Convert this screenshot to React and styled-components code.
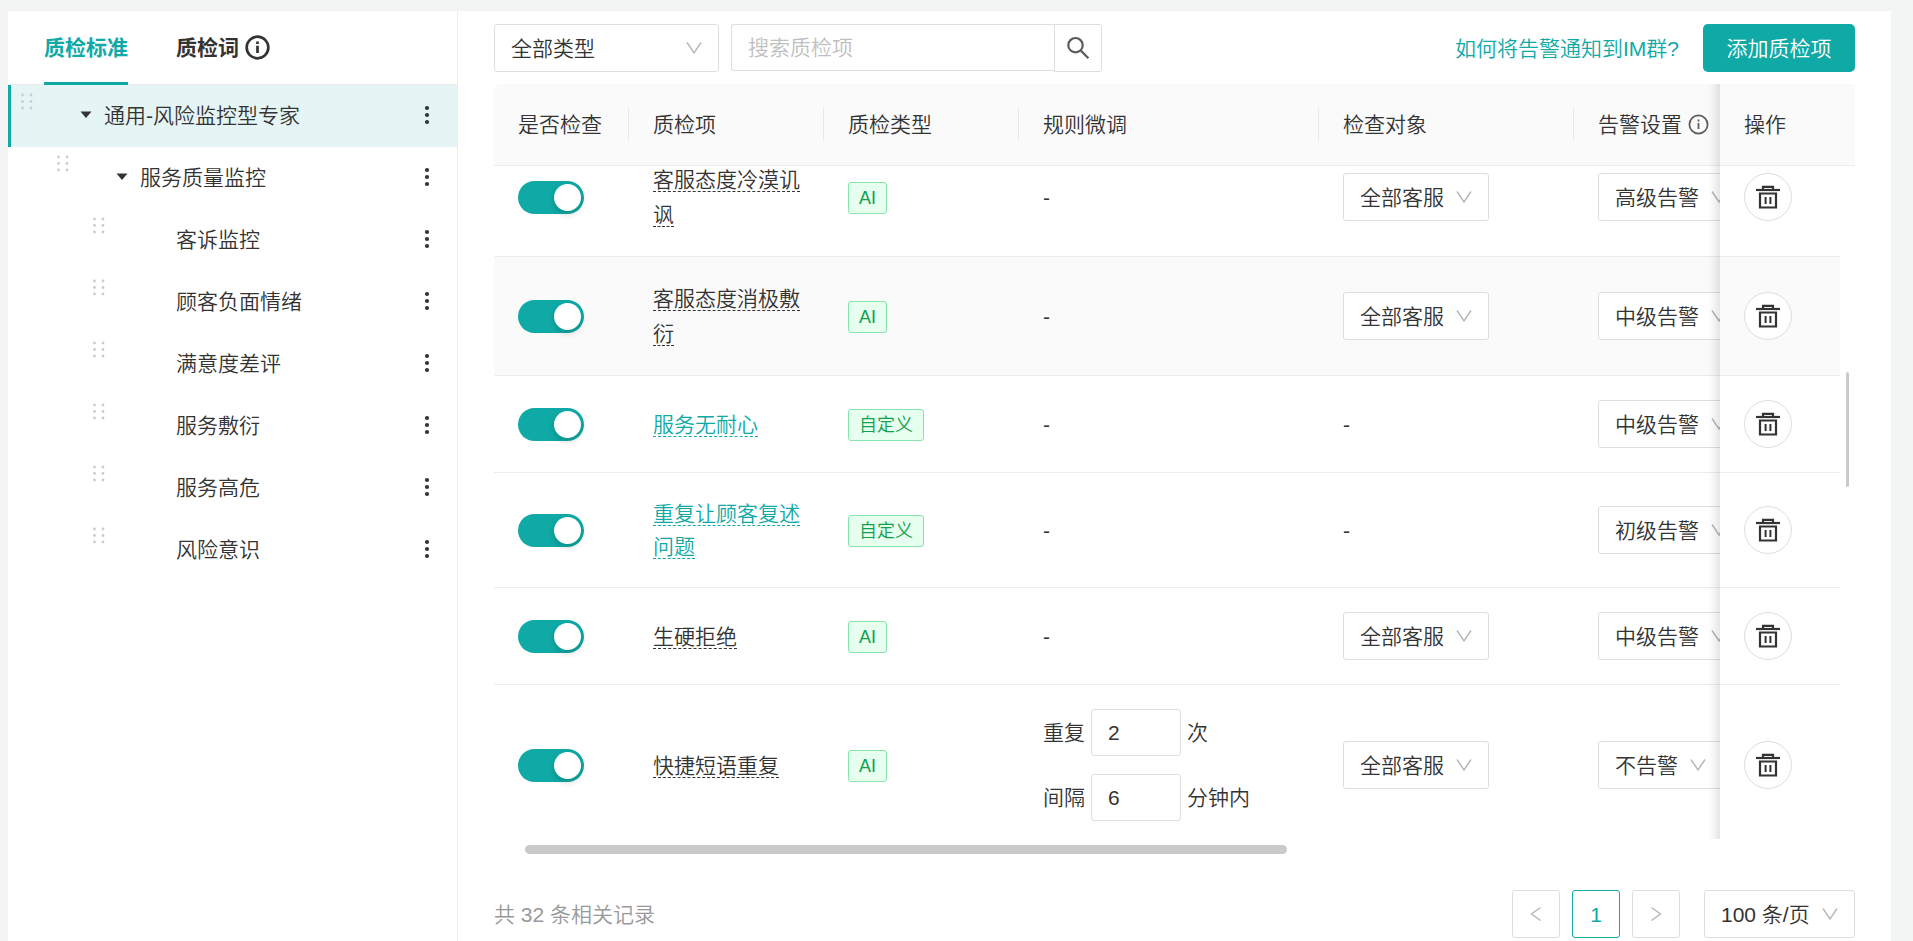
import { useLayoutEffect, useRef, useState } from 'react'
import styled, { createGlobalStyle } from 'styled-components'

const PRIMARY = '#0fa9a6'
const TEXT = '#333333'
const BORDER = '#dedede'
const LINE = '#ececec'

const GlobalStyle = createGlobalStyle`
  *, *::before, *::after {
    box-sizing: border-box;
  }

  body {
    margin: 0;
    background: #f3f5f5;
    color: ${TEXT};
    font-family: 'Liberation Sans', 'Noto Sans CJK SC', sans-serif;
    font-size: 21px;
    font-weight: 350;
    line-height: 33px;
  }

  button, input, select {
    font: inherit;
    color: inherit;
  }
`

const Page = styled.div`
  padding: 11px 22px 0 8px;
`

const Panel = styled.div`
  display: flex;
  min-height: calc(100vh - 11px);
  background: #ffffff;
`

/* ---------- sidebar ---------- */

const Sidebar = styled.aside`
  flex: 0 0 450px;
  border-right: 1px solid ${LINE};
`

const Tabs = styled.div`
  display: flex;
  gap: 48px;
  height: 74px;
  padding: 0 36px;
  border-bottom: 1px solid ${LINE};
`

const Tab = styled.button`
  display: flex;
  align-items: center;
  gap: 6px;
  margin: 0 0 -1px;
  padding: 1px 0 0;
  border: 0;
  border-bottom: 3px solid ${({ $active }) => ($active ? PRIMARY : 'transparent')};
  background: none;
  color: ${({ $active }) => ($active ? PRIMARY : TEXT)};
  font-weight: 700;
  cursor: pointer;
`

const Tree = styled.ul`
  margin: 0;
  padding: 0;
  list-style: none;
`

const TreeRow = styled.li`
  display: flex;
  align-items: center;
  height: 62px;
  padding: 0 18px 2px ${({ $level }) => 13 + $level * 36}px;
  background: ${({ $selected }) => ($selected ? '#e5f5f5' : 'transparent')};
  box-shadow: ${({ $selected }) => ($selected ? `inset 3px 0 0 ${PRIMARY}` : 'none')};
`

const Grip = styled.svg`
  align-self: flex-start;
  flex: none;
  margin: 8px 35px 0 0;
  fill: #cccccc;
`

const Switcher = styled.span`
  display: flex;
  justify-content: center;
  flex: 0 0 36px;
`

const IconButton = styled.button`
  display: flex;
  align-items: center;
  justify-content: center;
  padding: 0;
  width: 24px;
  height: 24px;
  border: 0;
  background: none;
  cursor: pointer;
`

const TreeLabel = styled.span`
  flex: 1;
`

/* ---------- toolbar ---------- */

const Main = styled.main`
  flex: 1;
  min-width: 0;
  padding: 13px 36px 0;
`

const Toolbar = styled.div`
  display: flex;
  align-items: center;
  gap: 12px;
  height: 48px;
  margin-bottom: 12px;
`

const SelectBox = styled.span`
  display: inline-grid;
  align-items: center;
  width: ${({ $width }) => $width}px;
  vertical-align: middle;

  select, svg {
    grid-area: 1 / 1;
  }

  select {
    width: 100%;
    height: 48px;
    padding: 0 36px 0 16px;
    border: 1px solid ${BORDER};
    border-radius: 3px;
    background: #ffffff;
    appearance: none;
    outline: none;
  }

  svg {
    justify-self: end;
    margin-right: 16px;
    pointer-events: none;
  }
`

const SearchForm = styled.form`
  display: flex;
  align-items: flex-start;
  width: 371px;
  height: 48px;
`

const SearchInput = styled.input`
  flex: 1;
  min-width: 0;
  height: 47px;
  padding: 0 16px;
  border: 1px solid ${BORDER};
  border-right: 0;
  border-radius: 3px 0 0 3px;
  outline: none;

  &::placeholder {
    color: #bfbfbf;
    opacity: 1;
  }
`

const SearchButton = styled.button`
  display: flex;
  align-items: center;
  justify-content: center;
  width: 48px;
  height: 48px;
  padding: 0;
  border: 1px solid ${BORDER};
  border-radius: 0 3px 3px 0;
  background: #ffffff;
`

const HelpLink = styled.a`
  margin-left: auto;
  margin-right: 12px;
  color: ${PRIMARY};
  text-decoration: none;
`

const AddButton = styled.button`
  width: 152px;
  height: 48px;
  padding: 0;
  border: 0;
  border-radius: 5px;
  background: ${PRIMARY};
  color: #ffffff;
`

/* ---------- table ---------- */

const HeadScroll = styled.div`
  overflow: hidden;
  border-radius: 5px 0 0 0;
`

const BodyArea = styled.div`
  display: flex;
  height: calc(100vh - 268px);
`

const BodyScroll = styled.div`
  flex: 1;
  min-width: 0;
  overflow: auto;
  scrollbar-width: none;
`

const Table = styled.table`
  width: 100%;
  min-width: ${({ $minWidth }) => $minWidth}px;
  table-layout: fixed;
  border-collapse: separate;
  border-spacing: 0;
`

const HeadCell = styled.th`
  height: 82px;
  padding: 0;
  border-bottom: 1px solid ${LINE};
  background: #fafafa;
  font-weight: 350;
  text-align: left;
`

const HeadLabel = styled.div`
  display: flex;
  align-items: center;
  gap: 6px;
  height: 33px;
  padding-left: 24px;
  border-right: 1px solid ${({ $divider }) => ($divider ? '#e8e8e8' : 'transparent')};
`

const Row = styled.tr`
  --row-bg: ${({ $hovered }) => ($hovered ? '#fafafa' : '#ffffff')};
`

const Cell = styled.td`
  padding: 24px;
  border-bottom: 1px solid ${LINE};
  background: var(--row-bg);
`

const fixedRight = `
  position: sticky;
  right: 0;

  &::before {
    content: '';
    position: absolute;
    top: 0;
    right: 100%;
    bottom: -1px;
    width: 45px;
    box-shadow: inset -15px 0 12px -12px rgba(0, 0, 0, 0.15);
    pointer-events: none;
  }
`

const FixedHeadCell = styled(HeadCell)`
  ${fixedRight}
`

const FixedCell = styled(Cell)`
  ${fixedRight}
`

const Switch = styled.input`
  display: flex;
  align-items: center;
  width: 66px;
  height: 33px;
  margin: 0;
  padding: 3px;
  border-radius: 17px;
  background: ${PRIMARY};
  appearance: none;
  cursor: pointer;

  &::before {
    content: '';
    width: 27px;
    height: 27px;
    margin-left: auto;
    border-radius: 50%;
    background: #ffffff;
    box-shadow: 0 3px 6px rgba(0, 35, 11, 0.2);
  }

  &:not(:checked) {
    background: #bfbfbf;
  }

  &:not(:checked)::before {
    margin-left: 0;
  }
`

const ItemName = styled.span`
  border-bottom: 1px dashed ${TEXT};
  line-height: 35px;
`

const ItemLink = styled.a`
  border-bottom: 1px dashed ${PRIMARY};
  color: ${PRIMARY};
  line-height: 33px;
  text-decoration: none;
`

const Tag = styled.span`
  display: inline-block;
  height: 32px;
  padding: 0 10px;
  border: 1px solid #86e5ac;
  border-radius: 3px;
  background: #e6ffef;
  color: #10a14f;
  font-size: 18px;
  line-height: 30px;
  vertical-align: middle;
`

const Rules = styled.div`
  display: flex;
  flex-direction: column;
  gap: 18px;
`

const Rule = styled.label`
  display: flex;
  align-items: center;
  gap: 6px;
`

const RuleInput = styled.input`
  width: 90px;
  height: 47px;
  padding: 0 16px;
  border: 1px solid ${BORDER};
  border-radius: 3px;
  outline: none;
`

const DeleteButton = styled.button`
  display: flex;
  align-items: center;
  justify-content: center;
  width: 48px;
  height: 48px;
  padding: 0;
  border: 1px solid ${BORDER};
  border-radius: 50%;
  background: #ffffff;
`

const ScrollGutter = styled.div`
  flex: 0 0 15px;
  padding: 206px 6px 0;
`

const VerticalThumb = styled.div`
  height: 115px;
  border-radius: 2px;
  background: #cacaca;
`

const HorizontalThumb = styled.div`
  width: 56%;
  height: 9px;
  margin: 6px 0 36px 31px;
  border-radius: 5px;
  background: #cacaca;
`

/* ---------- footer ---------- */

const Footer = styled.footer`
  display: flex;
  align-items: center;
  gap: 12px;
`

const Total = styled.span`
  margin-right: auto;
  color: #999999;
`

const PageButton = styled.button`
  display: flex;
  align-items: center;
  justify-content: center;
  width: 48px;
  height: 48px;
  padding: 0;
  border: 1px solid ${({ $active }) => ($active ? PRIMARY : BORDER)};
  border-radius: 3px;
  background: #ffffff;
  color: ${({ $active }) => ($active ? PRIMARY : '#bfbfbf')};
`

const PageSize = styled.div`
  display: flex;
  margin-left: 12px;
`

/* ---------- icons ---------- */

function InfoIcon({ size, stroke, color }) {
  return (
    <svg width={size} height={size} viewBox="0 0 24 24" fill="none" stroke={color} strokeWidth={stroke} aria-hidden="true">
      <circle cx="12" cy="12" r="10.4" />
      <path d="M12 10.2v7M12 6.2v2.4" />
    </svg>
  )
}

function ChevronDown() {
  return (
    <svg width="18" height="14" viewBox="0 0 18 14" fill="none" stroke="#b8b8b8" strokeWidth="1.5" aria-hidden="true">
      <path d="M2 1.5 9 12l7-10.5" />
    </svg>
  )
}

function SearchIcon() {
  return (
    <svg width="24" height="24" viewBox="0 0 24 24" fill="none" stroke="#5c5c5c" strokeWidth="2.2" aria-hidden="true">
      <circle cx="9.5" cy="9.2" r="7.2" />
      <path d="m14.6 14.4 7.8 7.8" />
    </svg>
  )
}

function TrashIcon() {
  return (
    <svg width="24" height="24" viewBox="0 0 24 24" fill="none" stroke="#333333" strokeWidth="2.2" aria-hidden="true">
      <path d="M7 4.5V1.8h10v2.7" />
      <path d="M0 5h24" />
      <path d="M4 8.5h16v14H4z" />
      <path d="M9.6 12v7M14.4 12v7" strokeWidth="2" />
    </svg>
  )
}

function PageArrow({ next }) {
  return (
    <svg width="12" height="16" viewBox="0 0 12 16" fill="none" stroke="#b8b8b8" strokeWidth="1.5" aria-hidden="true">
      <path d={next ? 'M1.5 1.5 10.5 8l-9 6.5' : 'M10.5 1.5 1.5 8l9 6.5'} />
    </svg>
  )
}

function GripIcon() {
  return (
    <Grip width="12" height="18" viewBox="0 0 12 18" aria-hidden="true">
      {[2, 8.5, 15].map((y) => (
        <g key={y}>
          <circle cx="1.5" cy={y} r="1.4" />
          <circle cx="10" cy={y} r="1.4" />
        </g>
      ))}
    </Grip>
  )
}

/* ---------- data ---------- */

const tree = [
  { label: '通用-风险监控型专家', level: 0, open: true },
  { label: '服务质量监控', level: 1, open: true },
  { label: '客诉监控', level: 2 },
  { label: '顾客负面情绪', level: 2 },
  { label: '满意度差评', level: 2 },
  { label: '服务敷衍', level: 2 },
  { label: '服务高危', level: 2 },
  { label: '风险意识', level: 2 },
]

const items = [
  { name: '客服态度冷漠讥讽', type: 'AI', target: '全部客服', alarm: '高级告警' },
  { name: '客服态度消极敷衍', type: 'AI', target: '全部客服', alarm: '中级告警', hovered: true },
  { name: '服务无耐心', type: '自定义', alarm: '中级告警' },
  { name: '重复让顾客复述问题', type: '自定义', alarm: '初级告警' },
  { name: '生硬拒绝', type: 'AI', target: '全部客服', alarm: '中级告警' },
  {
    name: '快捷短语重复',
    type: 'AI',
    target: '全部客服',
    alarm: '不告警',
    rules: [
      { before: '重复', value: 2, after: '次' },
      { before: '间隔', value: 6, after: '分钟内' },
    ],
  },
]

const columns = [
  { title: '是否检查', width: 135, divider: true },
  { title: '质检项', width: 195, divider: true },
  { title: '质检类型', width: 195, divider: true },
  { title: '规则微调', width: 300, divider: true },
  { title: '检查对象', width: 255, divider: true },
  { title: '告警设置', info: true },
]

function Select({ label, width, value }) {
  return (
    <SelectBox $width={width}>
      <select aria-label={label} defaultValue={value}>
        <option>{value}</option>
      </select>
      <ChevronDown />
    </SelectBox>
  )
}

function Columns({ last }) {
  return (
    <colgroup>
      {columns.map((c) => (
        <col key={c.title} width={c.width} />
      ))}
      <col width={last} />
    </colgroup>
  )
}

function ItemRow({ item }) {
  const [checked, setChecked] = useState(true)

  return (
    <Row $hovered={item.hovered}>
      <Cell>
        <Switch type="checkbox" role="switch" aria-label={item.name} checked={checked} onChange={() => setChecked(!checked)} />
      </Cell>
      <Cell>
        {item.type === 'AI' ? <ItemName>{item.name}</ItemName> : <ItemLink href="#">{item.name}</ItemLink>}
      </Cell>
      <Cell>
        <Tag>{item.type}</Tag>
      </Cell>
      <Cell>
        {item.rules ? (
          <Rules>
            {item.rules.map((rule) => (
              <Rule key={rule.before}>
                {rule.before}
                <RuleInput defaultValue={rule.value} />
                {rule.after}
              </Rule>
            ))}
          </Rules>
        ) : (
          '-'
        )}
      </Cell>
      <Cell>{item.target ? <Select label="检查对象" width={146} value={item.target} /> : '-'}</Cell>
      <Cell>
        <Select label="告警设置" width={item.alarm.length * 21 + 62} value={item.alarm} />
      </Cell>
      <FixedCell>
        <DeleteButton type="button" aria-label="删除">
          <TrashIcon />
        </DeleteButton>
      </FixedCell>
    </Row>
  )
}

function QualityTable() {
  const bodyRef = useRef(null)
  const headRef = useRef(null)

  useLayoutEffect(() => {
    bodyRef.current.scrollTop = 28
  }, [])

  const syncHead = () => {
    headRef.current.scrollLeft = bodyRef.current.scrollLeft
  }

  return (
    <>
      <HeadScroll ref={headRef}>
        <Table $minWidth={1440}>
          <Columns last={135} />
          <thead>
            <tr>
              {columns.map((c) => (
                <HeadCell key={c.title}>
                  <HeadLabel $divider={c.divider}>
                    {c.title}
                    {c.info && <InfoIcon size={21} stroke={2} color="#5c5c5c" />}
                  </HeadLabel>
                </HeadCell>
              ))}
              <FixedHeadCell>
                <HeadLabel>操作</HeadLabel>
              </FixedHeadCell>
            </tr>
          </thead>
        </Table>
      </HeadScroll>
      <BodyArea>
        <BodyScroll ref={bodyRef} onScroll={syncHead}>
          <Table $minWidth={1425}>
            <Columns last={120} />
            <tbody>
              {items.map((item) => (
                <ItemRow key={item.name} item={item} />
              ))}
            </tbody>
          </Table>
        </BodyScroll>
        <ScrollGutter>
          <VerticalThumb />
        </ScrollGutter>
      </BodyArea>
      <HorizontalThumb />
    </>
  )
}

export default function App() {
  return (
    <Page>
      <GlobalStyle />
      <Panel>
        <Sidebar>
          <Tabs>
            <Tab type="button" $active>质检标准</Tab>
            <Tab type="button">
              质检词
              <InfoIcon size={25} stroke={2.6} color={TEXT} />
            </Tab>
          </Tabs>
          <Tree>
            {tree.map((node, index) => (
              <TreeRow key={node.label} $level={node.level} $selected={index === 0}>
                <GripIcon />
                <Switcher>
                  {node.open && (
                    <IconButton type="button" aria-label="收起">
                      <svg width="12" height="8" viewBox="0 0 12 8" aria-hidden="true">
                        <path d="M.5.5h11L6 7z" fill={TEXT} />
                      </svg>
                    </IconButton>
                  )}
                </Switcher>
                <TreeLabel>{node.label}</TreeLabel>
                <IconButton type="button" aria-label="更多">
                  <svg width="6" height="20" viewBox="0 0 6 20" fill={TEXT} aria-hidden="true">
                    <circle cx="3" cy="3" r="2.1" />
                    <circle cx="3" cy="10" r="2.1" />
                    <circle cx="3" cy="17" r="2.1" />
                  </svg>
                </IconButton>
              </TreeRow>
            ))}
          </Tree>
        </Sidebar>
        <Main>
          <Toolbar>
            <Select label="质检类型" width={225} value="全部类型" />
            <SearchForm onSubmit={(e) => e.preventDefault()}>
              <SearchInput aria-label="搜索质检项" placeholder="搜索质检项" />
              <SearchButton aria-label="搜索">
                <SearchIcon />
              </SearchButton>
            </SearchForm>
            <HelpLink href="#">如何将告警通知到IM群?</HelpLink>
            <AddButton type="button">添加质检项</AddButton>
          </Toolbar>
          <QualityTable />
          <Footer>
            <Total>共 32 条相关记录</Total>
            <PageButton type="button" aria-label="上一页">
              <PageArrow />
            </PageButton>
            <PageButton type="button" $active>1</PageButton>
            <PageButton type="button" aria-label="下一页">
              <PageArrow next />
            </PageButton>
            <PageSize>
              <Select label="每页条数" width={151} value="100 条/页" />
            </PageSize>
          </Footer>
        </Main>
      </Panel>
    </Page>
  )
}
